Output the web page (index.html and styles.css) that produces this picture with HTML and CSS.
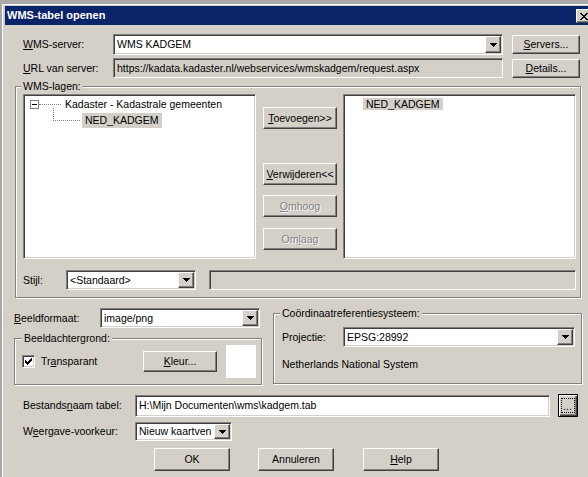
FILE: index.html
```html
<!DOCTYPE html>
<html lang="nl">
<head>
<meta charset="utf-8">
<title>WMS-tabel openen</title>
<link rel="stylesheet" href="styles.css">
</head>
<body>
<div class="window">
  <div class="frame">
    <div class="titlebar">
      <span class="title">WMS-tabel openen</span>
      <div class="btn close">
        <svg width="8" height="7" viewBox="0 0 8 7"><path d="M0 0h2v1H0zM6 0h2v1H6zM1 1h2v1H1zM5 1h2v1H5zM2 2h4v1H2zM3 3h2v1H3zM2 4h4v1H2zM1 5h2v1H1zM5 5h2v1H5zM0 6h2v1H0zM6 6h2v1H6z" fill="#000"/></svg>
      </div>
    </div>

    <div class="content">
      <div class="row r-server">
        <span class="lbl l-main"><u>W</u>MS-server:</span>
        <div class="combo sunken c-server">
          <span class="val">WMS KADGEM</span>
          <span class="btn arrow"><svg width="7" height="4" viewBox="0 0 7 4"><path d="M0 0h7v1H0zM1 1h5v1H1zM2 2h3v1H2zM3 3h1v1H3z" fill="#000"/></svg></span>
        </div>
        <div class="btn b-side"><span><u>S</u>ervers...</span></div>
      </div>

      <div class="row r-url">
        <span class="lbl l-main"><u>U</u>RL van server:</span>
        <div class="field sunken disabled f-url">https://kadata.kadaster.nl/webservices/wmskadgem/request.aspx</div>
        <div class="btn b-side"><span><u>D</u>etails...</span></div>
      </div>

      <div class="group g-lagen">
        <span class="legend lg-lagen">WMS-lagen:</span>
        <div class="lists">
          <div class="sunken tree">
            <div class="tnode n-root">
              <span class="expander"><span class="minus"></span></span>
              <span class="hdots"></span>
              <span class="ttext t-root">Kadaster - Kadastrale gemeenten</span>
            </div>
            <div class="tnode n-child">
              <span class="connector"></span>
              <span class="ttext sel">NED_KADGEM</span>
            </div>
          </div>

          <div class="movebtns">
            <div class="btn mb mb-add"><span><u>T</u>oevoegen&gt;&gt;</span></div>
            <div class="btn mb mb-del"><span><u>V</u>erwijderen&lt;&lt;</span></div>
            <div class="btn mb mb-up dis"><span><u>O</u>mhoog</span></div>
            <div class="btn mb mb-down dis"><span>Om<u>l</u>aag</span></div>
          </div>

          <div class="sunken chosen">
            <span class="ttext sel">NED_KADGEM</span>
          </div>
        </div>

        <div class="row r-stijl">
          <span class="lbl l-stijl">Stijl:</span>
          <div class="combo sunken c-stijl">
            <span class="val">&lt;Standaard&gt;</span>
            <span class="btn arrow"><svg width="7" height="4" viewBox="0 0 7 4"><path d="M0 0h7v1H0zM1 1h5v1H1zM2 2h3v1H2zM3 3h1v1H3z" fill="#000"/></svg></span>
          </div>
          <div class="field sunken disabled f-stijl"></div>
        </div>
      </div>

      <div class="lower">
        <div class="leftcol">
          <div class="row r-fmt">
            <span class="lbl l-fmt"><u>B</u>eeldformaat:</span>
            <div class="combo sunken c-fmt">
              <span class="val">image/png</span>
              <span class="btn arrow"><svg width="7" height="4" viewBox="0 0 7 4"><path d="M0 0h7v1H0zM1 1h5v1H1zM2 2h3v1H2zM3 3h1v1H3z" fill="#000"/></svg></span>
            </div>
          </div>
          <div class="group g-bg">
            <span class="legend lg-bg">Beeldachtergrond:</span>
            <div class="row r-bg">
              <div class="chk-wrap">
                <span class="sunken chk"><svg width="7" height="7" viewBox="0 0 7 7"><path d="M6 0h1v1H6zM5 1h2v1H5zM0 2h1v1H0zM4 2h3v1H4zM0 3h2v1H0zM3 3h3v1H3zM0 4h5v1H0zM1 5h3v1H1zM2 6h1v1H2z" fill="#000"/></svg></span>
                <span class="chk-lbl">Tr<u>a</u>nsparant</span>
              </div>
              <div class="btn b-kleur"><span><u>K</u>leur...</span></div>
              <div class="swatch"></div>
            </div>
          </div>
        </div>

        <div class="group g-crs">
          <span class="legend lg-crs">Coördinaatreferentiesysteem:</span>
          <div class="row r-proj">
            <span class="lbl l-proj">Projectie:</span>
            <div class="combo sunken c-proj">
              <span class="val">EPSG:28992</span>
              <span class="btn arrow"><svg width="7" height="4" viewBox="0 0 7 4"><path d="M0 0h7v1H0zM1 1h5v1H1zM2 2h3v1H2zM3 3h1v1H3z" fill="#000"/></svg></span>
            </div>
          </div>
          <div class="crs-name">Netherlands National System</div>
        </div>
      </div>

      <div class="row r-file">
        <span class="lbl l-bottom">Bestands<u>n</u>aam tabel:</span>
        <div class="field sunken f-file">H:\Mijn Documenten\wms\kadgem.tab</div>
        <div class="btn browse"><span class="focus">...</span></div>
      </div>

      <div class="row r-view">
        <span class="lbl l-bottom">W<u>e</u>ergave-voorkeur:</span>
        <div class="combo sunken c-view">
          <span class="val">Nieuw kaartven</span>
          <span class="btn arrow"><svg width="7" height="4" viewBox="0 0 7 4"><path d="M0 0h7v1H0zM1 1h5v1H1zM2 2h3v1H2zM3 3h1v1H3z" fill="#000"/></svg></span>
        </div>
      </div>

      <div class="row r-actions">
        <div class="btn act act-ok"><span>OK</span></div>
        <div class="btn act act-cancel"><span>Annuleren</span></div>
        <div class="btn act act-help"><span><u>H</u>elp</span></div>
      </div>
    </div>
  </div>
</div>
</body>
</html>
```

FILE: styles.css
```css
* { box-sizing: border-box; }

html, body {
  margin: 0;
  padding: 0;
}

body {
  width: 588px;
  height: 477px;
  overflow: hidden;
  background: #d4d0c8;
  font-family: "Liberation Sans", Arial, sans-serif;
  font-size: 10.5px;
  line-height: 13px;
  color: #000;
}

u { text-decoration: underline; text-underline-offset: 1px; }

/* window chrome */
.window {
  width: 594px;
  height: 490px;
  border-top: 4px solid #a9a8a6;
  border-left: 2px solid #a9a8a6;
  background: #d4d0c8;
}

.frame {
  height: 100%;
  border-top: 1px solid #fff;
  border-left: 1px solid #fff;
  padding: 1px 0 0 2px;
}

.titlebar {
  height: 19px;
  background: #0a246a;
  display: flex;
  align-items: flex-start;
  justify-content: space-between;
}

.title {
  color: #fff;
  font-weight: bold;
  font-size: 11px;
  line-height: 19px;
  padding-left: 2px;
}

.close {
  width: 16px;
  height: 14px;
  margin-top: 3px;
  margin-right: 2px;
}

/* generic controls */
.btn {
  background: #d4d0c8;
  border: 1px solid;
  border-color: #fff #404040 #404040 #fff;
  box-shadow: inset -1px -1px 0 #808080;
  display: flex;
  align-items: center;
  justify-content: center;
  white-space: nowrap;
}

.sunken {
  background: #fff;
  border: 1px solid;
  border-color: #808080 #fff #fff #808080;
  box-shadow: inset 1px 1px 0 #404040, inset -1px -1px 0 #d4d0c8;
}

.sunken.disabled { background: #d4d0c8; }

.row {
  display: flex;
  align-items: center;
}

.lbl { white-space: nowrap; flex: none; }

.combo {
  display: flex;
  align-items: stretch;
  padding: 1px;
  flex: none;
}

.combo .val {
  flex: 1;
  min-width: 0;
  overflow: hidden;
  white-space: nowrap;
  padding-left: 2px;
  display: flex;
  align-items: center;
}

.combo .arrow {
  width: 16px;
  flex: none;
}

.field {
  flex: none;
  display: flex;
  align-items: center;
  padding-left: 3px;
  white-space: nowrap;
  overflow: hidden;
}

/* groups */
.group {
  border: 1px solid #808080;
  box-shadow: 1px 1px 0 #fff, inset 1px 1px 0 #fff;
  flex: none;
}

.legend {
  display: block;
  width: fit-content;
  height: 13px;
  line-height: 13px;
  margin-top: -7px;
  padding: 0 2px;
  background: #d4d0c8;
  white-space: nowrap;
}

/* row 1 & 2 */
.r-server { margin-top: 9px; padding-left: 18px; height: 21px; }
.r-url { margin-top: 3px; padding-left: 18px; height: 20px; }
.l-main { width: 90px; }
.c-server { width: 390px; height: 21px; }
.f-url { width: 390px; height: 20px; }
.b-side { width: 68px; height: 19px; margin-left: 9px; }

/* WMS-lagen group */
.g-lagen {
  margin-top: 8px;
  margin-left: 10px;
  width: 566px;
  height: 212px;
}
.lg-lagen { margin-left: 5px; }

.lists {
  display: flex;
  margin-top: 1px;
  margin-left: 7px;
}

.tree {
  width: 233px;
  height: 165px;
  padding: 2px 0 0 6px;
  flex: none;
}

.tnode {
  display: flex;
  align-items: flex-start;
  height: 15px;
}

.expander {
  width: 9px;
  height: 9px;
  margin-top: 3px;
  border: 1px solid #808080;
  background: #fff;
  display: flex;
  align-items: center;
  justify-content: center;
  flex: none;
}

.minus {
  width: 5px;
  height: 1px;
  background: #000;
}

.hdots {
  width: 22px;
  height: 1px;
  margin-top: 7px;
  border-top: 1px dotted #808080;
  flex: none;
}

.ttext {
  line-height: 15px;
  height: 15px;
  white-space: nowrap;
}

.t-root { margin-left: 4px; }

.n-child { margin-top: 1px; }

.connector {
  width: 27px;
  height: 13px;
  margin-left: 23px;
  margin-top: -5px;
  border-left: 1px dotted #808080;
  border-bottom: 1px dotted #808080;
  flex: none;
}

.n-child .ttext { margin-left: 2px; }

.sel {
  background: #d4d0c8;
  padding: 0 3px;
}

.movebtns {
  display: flex;
  flex-direction: column;
  width: 74px;
  margin-left: 7px;
  flex: none;
}

.mb { height: 22px; }
.mb-add { margin-top: 13px; }
.mb-del { margin-top: 34px; }
.mb-up { margin-top: 10px; }
.mb-down { margin-top: 11px; }

.dis {
  color: #808080;
  text-shadow: 1px 1px 0 #fff;
}

.chosen {
  width: 233px;
  height: 165px;
  margin-left: 6px;
  padding: 2px 0 0 19px;
  flex: none;
}

.r-stijl {
  margin-top: 11px;
  margin-left: 7px;
  height: 20px;
}
.l-stijl { width: 43px; }
.c-stijl { width: 130px; height: 20px; }
.f-stijl { width: 367px; height: 20px; margin-left: 13px; }

/* lower section */
.lower {
  display: flex;
  align-items: flex-start;
  margin-left: 9px;
}

.leftcol {
  width: 248px;
  padding-top: 10px;
  flex: none;
}

.r-fmt { height: 20px; }
.l-fmt { width: 86px; }
.c-fmt { width: 160px; height: 20px; }

.g-bg {
  margin-top: 10px;
  width: 248px;
  height: 47px;
}
.lg-bg { margin-left: 7px; }

.r-bg { height: 33px; }

.chk-wrap {
  width: 128px;
  padding-left: 7px;
  display: flex;
  align-items: center;
  flex: none;
}

.chk {
  width: 13px;
  height: 13px;
  display: flex;
  align-items: center;
  justify-content: center;
  flex: none;
}

.chk-lbl { margin-left: 6px; }

.b-kleur { width: 74px; height: 21px; }

.swatch {
  width: 30px;
  height: 33px;
  margin-left: 9px;
  background: #fff;
}

.g-crs {
  margin-left: 11px;
  margin-top: 15px;
  width: 309px;
  height: 71px;
}
.lg-crs { margin-left: 6px; }

.r-proj {
  margin-top: 7px;
  padding-left: 8px;
  height: 20px;
}
.l-proj { width: 61px; }
.c-proj { width: 232px; height: 20px; }

.crs-name {
  margin-top: 11px;
  padding-left: 8px;
  line-height: 13px;
}

/* bottom rows */
.r-file { margin-top: 9px; padding-left: 18px; height: 23px; }
.l-bottom { width: 112px; }
.f-file { width: 415px; height: 22px; }

.browse {
  width: 20px;
  height: 23px;
  margin-left: 8px;
  border: 1px solid #000;
  box-shadow: inset 1px 1px 0 #fff, inset -1px -1px 0 #404040, inset -2px -2px 0 #808080;
}

.focus {
  width: 14px;
  height: 15px;
  border: 1px dotted #000;
  display: flex;
  align-items: flex-end;
  justify-content: center;
  line-height: 11px;
  margin-right: 1px;
  margin-bottom: 1px;
}

.r-view { margin-top: 5px; padding-left: 18px; height: 19px; }
.c-view { width: 97px; height: 19px; }

.r-actions { margin-top: 7px; height: 23px; }
.act { width: 76px; height: 23px; }
.act-ok { margin-left: 149px; }
.act-cancel { margin-left: 28px; }
.act-help { margin-left: 29px; }
```
